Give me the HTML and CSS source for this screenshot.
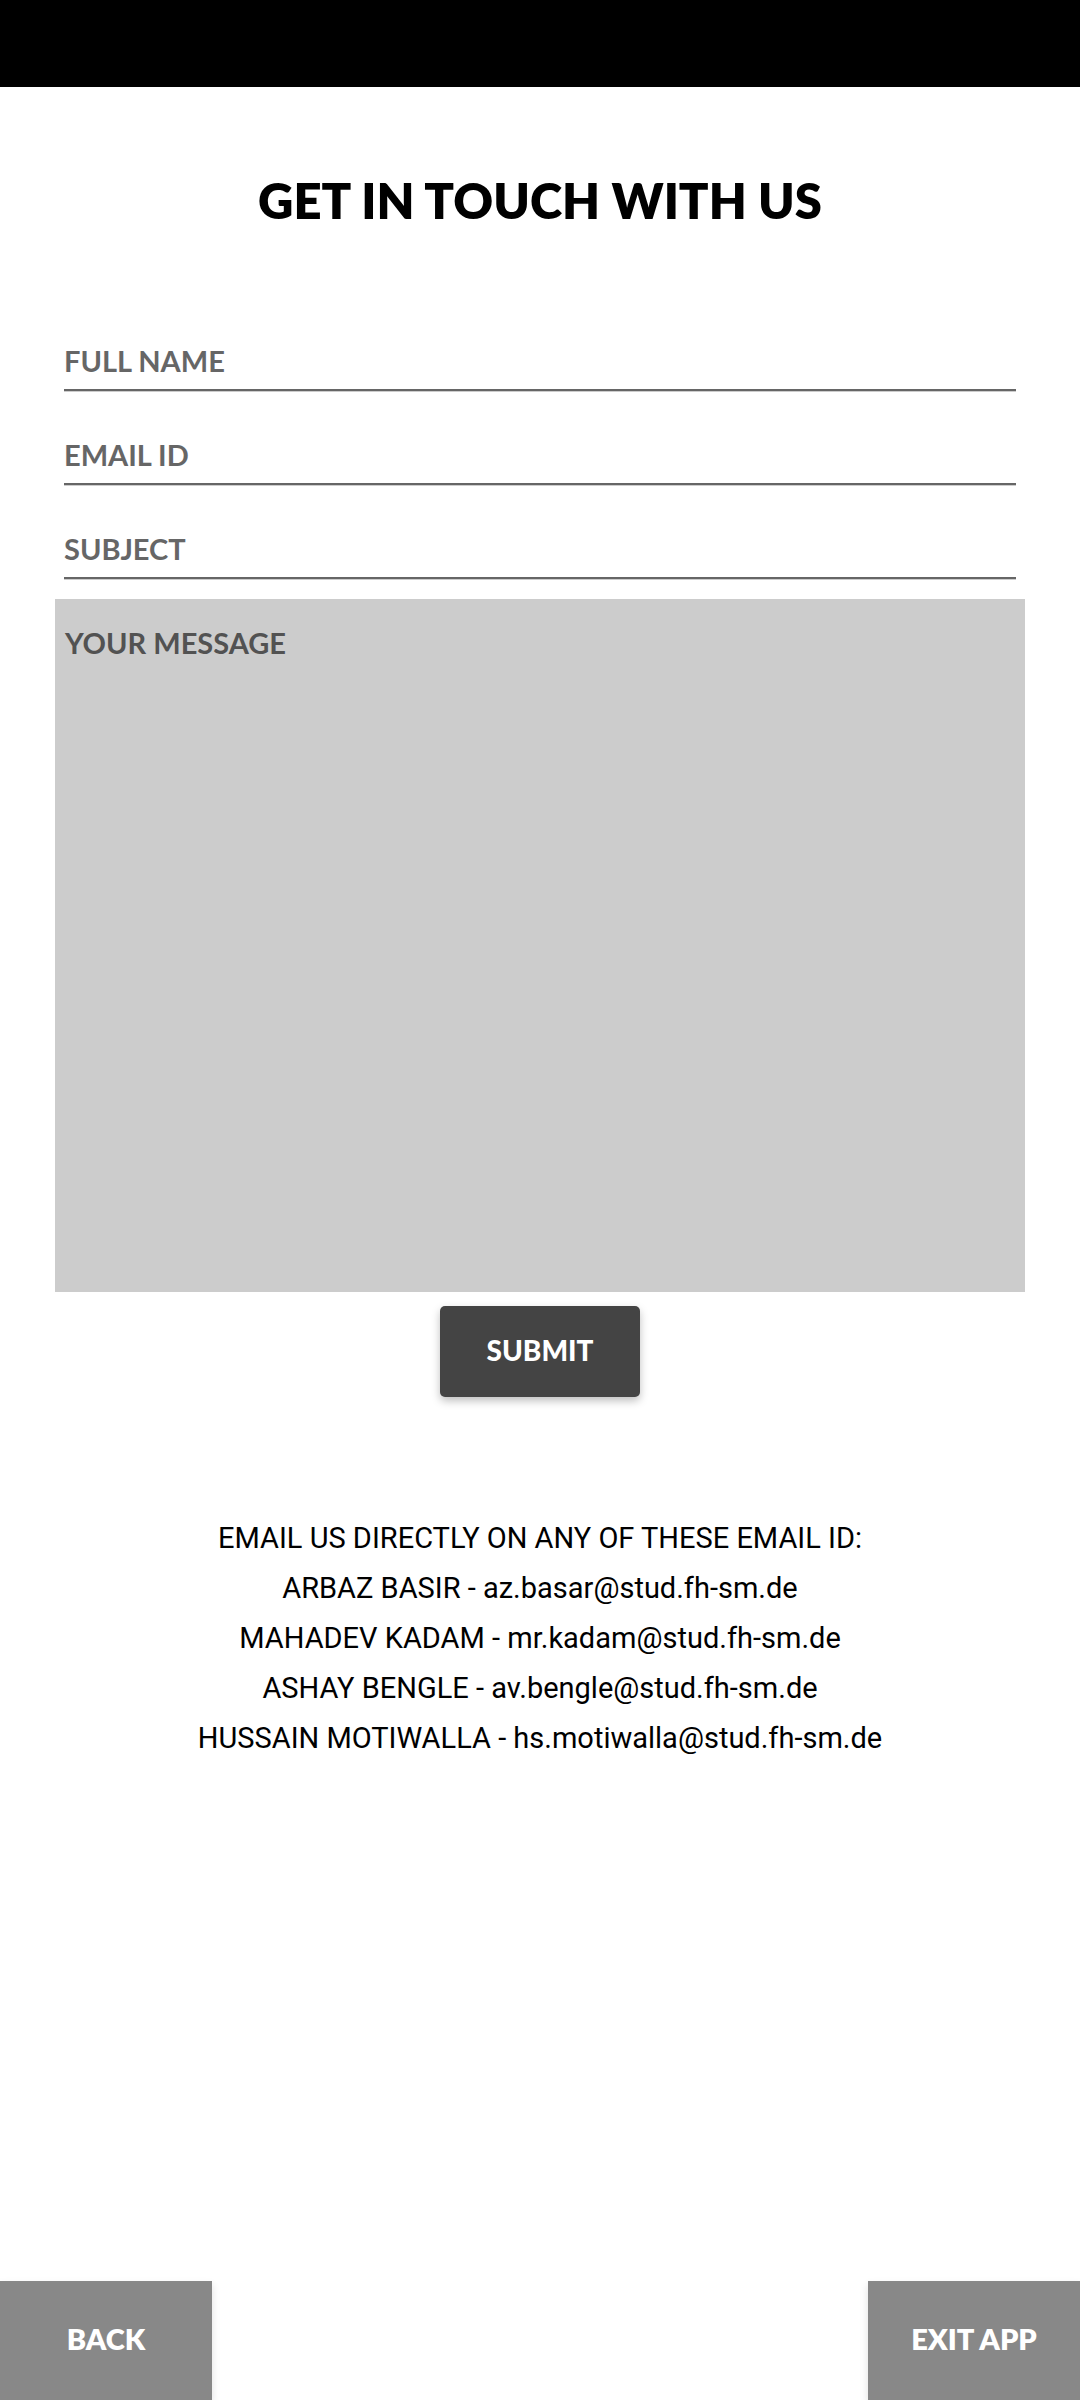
FILE: index.html
```html
<!DOCTYPE html>
<html lang="en">
<head>
<meta charset="utf-8">
<meta name="viewport" content="width=device-width, initial-scale=1">
<title>Get in touch with us</title>
<link rel="stylesheet" href="styles.css">
</head>
<body>
<div class="status-bar"></div>
<main class="content">
  <h1 class="title">GET IN TOUCH WITH US</h1>
  <form class="form">
    <div class="field"><input class="field-input" type="text" aria-label="Full name" placeholder="FULL NAME"></div>
    <div class="field"><input class="field-input" type="email" aria-label="Email ID" placeholder="EMAIL ID"></div>
    <div class="field"><input class="field-input" type="text" aria-label="Subject" placeholder="SUBJECT"></div>
    <textarea class="message" aria-label="Your message" placeholder="YOUR MESSAGE"></textarea>
    <button class="submit" type="submit">SUBMIT</button>
  </form>
  <section class="contacts">
    <p>EMAIL US DIRECTLY ON ANY OF THESE EMAIL ID:</p>
    <p>ARBAZ BASIR - az.basar@stud.fh-sm.de</p>
    <p>MAHADEV KADAM - mr.kadam@stud.fh-sm.de</p>
    <p>ASHAY BENGLE - av.bengle@stud.fh-sm.de</p>
    <p>HUSSAIN MOTIWALLA - hs.motiwalla@stud.fh-sm.de</p>
  </section>
</main>
<nav class="bottom-bar">
  <button class="nav-button" type="button">BACK</button>
  <button class="nav-button" type="button">EXIT APP</button>
</nav>
</body>
</html>
```
FILE: styles.css
```css
* {
  box-sizing: border-box;
}

body {
  margin: 0;
  min-height: 100vh;
  display: flex;
  flex-direction: column;
  background: #fff;
  color: #000;
  font-family: Lato, "Liberation Sans", sans-serif;
}

button,
input,
textarea {
  font: bold 29px/36px Lato, "Liberation Sans", sans-serif;
}

.status-bar {
  height: 87px;
  background: #000;
}

.content {
  flex: 1;
  padding: 80px 55px 0;
}

.title {
  margin: 0;
  font-size: 49px;
  line-height: 66px;
  font-weight: 800;
  text-align: center;
}

.form {
  display: flex;
  flex-direction: column;
  padding-top: 84px;
}

.field {
  height: 94px;
  padding: 0 9px;
}

.field-input {
  display: block;
  width: 100%;
  height: 74px;
  padding: 14px 0 0;
  border: 0;
  border-bottom: 2px solid #666;
  border-radius: 0;
  background: none;
  box-shadow: 0 1px 0 #ccc;
  outline: 0;
}

.field-input::placeholder {
  color: #666;
  opacity: 1;
}

.message {
  display: block;
  height: 693px;
  padding: 26px 10px;
  border: 0;
  background: #ccc;
  outline: 0;
  resize: none;
}

.message::placeholder {
  color: #525252;
  opacity: 1;
}

.submit {
  align-self: center;
  width: 200px;
  height: 91px;
  margin-top: 14px;
  padding: 0 0 4px;
  border: 0;
  border-radius: 5px;
  background: #444;
  color: #fff;
  font-size: 28px;
  font-weight: 900;
  box-shadow: 0 4px 8px rgba(0, 0, 0, 0.25);
}

.contacts {
  padding-top: 116px;
  font: 29px/50px Roboto, sans-serif;
  text-align: center;
}

.contacts p {
  margin: 0;
}

.bottom-bar {
  display: flex;
  justify-content: space-between;
}

.nav-button {
  width: 212px;
  height: 119px;
  padding: 0 0 4px;
  border: 0;
  background: #888;
  color: #fff;
  font-weight: 800;
  box-shadow: 0 4px 8px rgba(0, 0, 0, 0.12);
}
```
